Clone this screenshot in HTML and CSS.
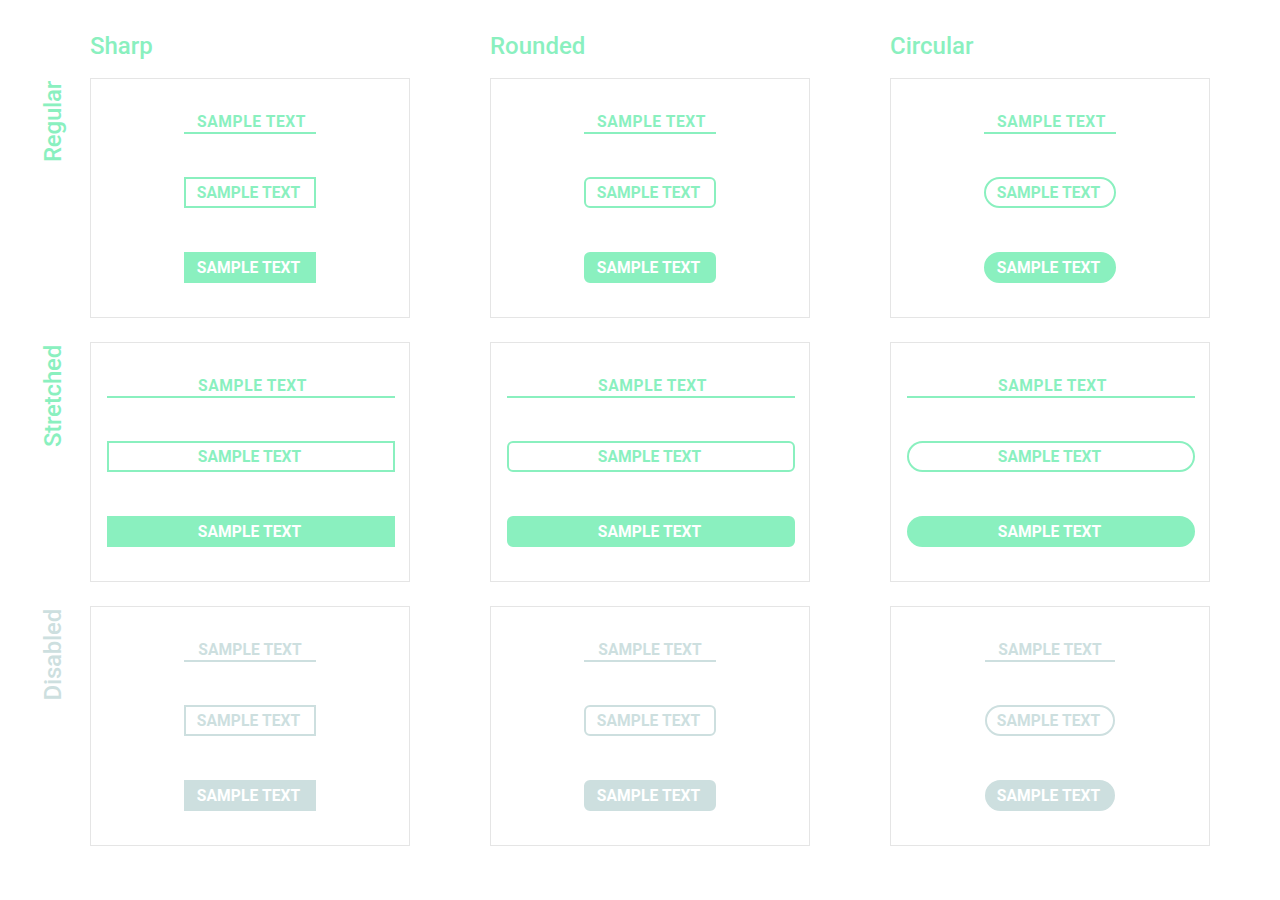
FILE: index.html
```html
<!DOCTYPE html>
<html lang="en">
<head>
<meta charset="utf-8">
<title>Button styles</title>
<link rel="stylesheet" href="styles.css">
</head>
<body>
<main class="page">
  <div class="head-row">
    <div class="label-col"></div>
    <div class="cols">
      <h2 class="col-title">Sharp</h2>
      <h2 class="col-title">Rounded</h2>
      <h2 class="col-title">Circular</h2>
    </div>
  </div>

  <div class="row">
    <div class="label-col"><span class="row-label">Regular</span></div>
    <div class="cols">
      <div class="card sharp">
        <a class="btn link">SAMPLE TEXT</a>
        <a class="btn outline">SAMPLE TEXT</a>
        <a class="btn fill">SAMPLE TEXT</a>
      </div>
      <div class="card rounded">
        <a class="btn link">SAMPLE TEXT</a>
        <a class="btn outline">SAMPLE TEXT</a>
        <a class="btn fill">SAMPLE TEXT</a>
      </div>
      <div class="card circular">
        <a class="btn link">SAMPLE TEXT</a>
        <a class="btn outline">SAMPLE TEXT</a>
        <a class="btn fill">SAMPLE TEXT</a>
      </div>
    </div>
  </div>

  <div class="row">
    <div class="label-col"><span class="row-label">Stretched</span></div>
    <div class="cols">
      <div class="card sharp stretched">
        <a class="btn link">SAMPLE TEXT</a>
        <a class="btn outline">SAMPLE TEXT</a>
        <a class="btn fill">SAMPLE TEXT</a>
      </div>
      <div class="card rounded stretched">
        <a class="btn link">SAMPLE TEXT</a>
        <a class="btn outline">SAMPLE TEXT</a>
        <a class="btn fill">SAMPLE TEXT</a>
      </div>
      <div class="card circular stretched">
        <a class="btn link">SAMPLE TEXT</a>
        <a class="btn outline">SAMPLE TEXT</a>
        <a class="btn fill">SAMPLE TEXT</a>
      </div>
    </div>
  </div>

  <div class="row disabled">
    <div class="label-col"><span class="row-label">Disabled</span></div>
    <div class="cols">
      <div class="card sharp">
        <a class="btn link">SAMPLE TEXT</a>
        <a class="btn outline">SAMPLE TEXT</a>
        <a class="btn fill">SAMPLE TEXT</a>
      </div>
      <div class="card rounded">
        <a class="btn link">SAMPLE TEXT</a>
        <a class="btn outline">SAMPLE TEXT</a>
        <a class="btn fill">SAMPLE TEXT</a>
      </div>
      <div class="card circular">
        <a class="btn link">SAMPLE TEXT</a>
        <a class="btn outline">SAMPLE TEXT</a>
        <a class="btn fill">SAMPLE TEXT</a>
      </div>
    </div>
  </div>
</main>
</body>
</html>
```

FILE: styles.css
```css
html, body {
  margin: 0;
  padding: 0;
  background: #ffffff;
}

body {
  font-family: Roboto, "Liberation Sans", sans-serif;
  --accent: #8af0bf;
  --muted: #cddfdf;
}

.page {
  padding-top: 31px;
  display: flex;
  flex-direction: column;
  gap: 24px;
}

.head-row,
.row {
  display: flex;
}

.head-row {
  margin-bottom: -7px;
}

.label-col {
  width: 90px;
  flex: none;
  display: flex;
  align-items: flex-start;
}

.cols {
  display: flex;
  gap: 80px;
}

.col-title {
  width: 320px;
  margin: 0;
  font-size: 24px;
  line-height: 30px;
  font-weight: 500;
  color: var(--accent);
}

.row-label {
  writing-mode: vertical-rl;
  transform: rotate(180deg);
  margin-left: 38px;
  margin-top: 3px;
  font-size: 24px;
  line-height: 30px;
  font-weight: 500;
  color: var(--accent);
  letter-spacing: -0.2px;
}

.card {
  width: 320px;
  height: 240px;
  box-sizing: border-box;
  border: 1px solid #e5e5e5;
  display: flex;
  flex-direction: column;
  align-items: center;
  padding-top: 22px;
}

.btn {
  display: block;
  box-sizing: border-box;
  width: 132px;
  font-size: 15.6px;
  font-weight: 700;
  text-align: center;
  color: var(--accent);
  text-decoration: none;
  letter-spacing: 0.1px;
}

.link {
  height: 33px;
  padding-top: 12px;
  padding-left: 3px;
  line-height: 19px;
  border-bottom: 2px solid var(--accent);
  letter-spacing: 0.6px;
}

.outline,
.fill {
  height: 31px;
  line-height: 27px;
  padding-top: 1px;
  padding-right: 3px;
  border: 2px solid var(--accent);
}

.outline {
  margin-top: 43px;
}

.fill {
  margin-top: 44px;
  background: var(--accent);
  color: #ffffff;
}

.rounded .outline,
.rounded .fill {
  border-radius: 6px;
}

.circular .outline,
.circular .fill {
  border-radius: 16px;
}

.stretched {
  align-items: stretch;
  padding-left: 16px;
  padding-right: 14px;
}

.stretched .btn {
  width: auto;
}

.disabled .row-label {
  color: var(--muted);
}

.disabled .btn {
  color: var(--muted);
  border-color: var(--muted);
  letter-spacing: 0.1px;
}

.disabled .link {
  padding-left: 0;
}

.disabled .fill {
  background: var(--muted);
  color: #ffffff;
}

.disabled .circular .btn {
  width: 130px;
}
```
